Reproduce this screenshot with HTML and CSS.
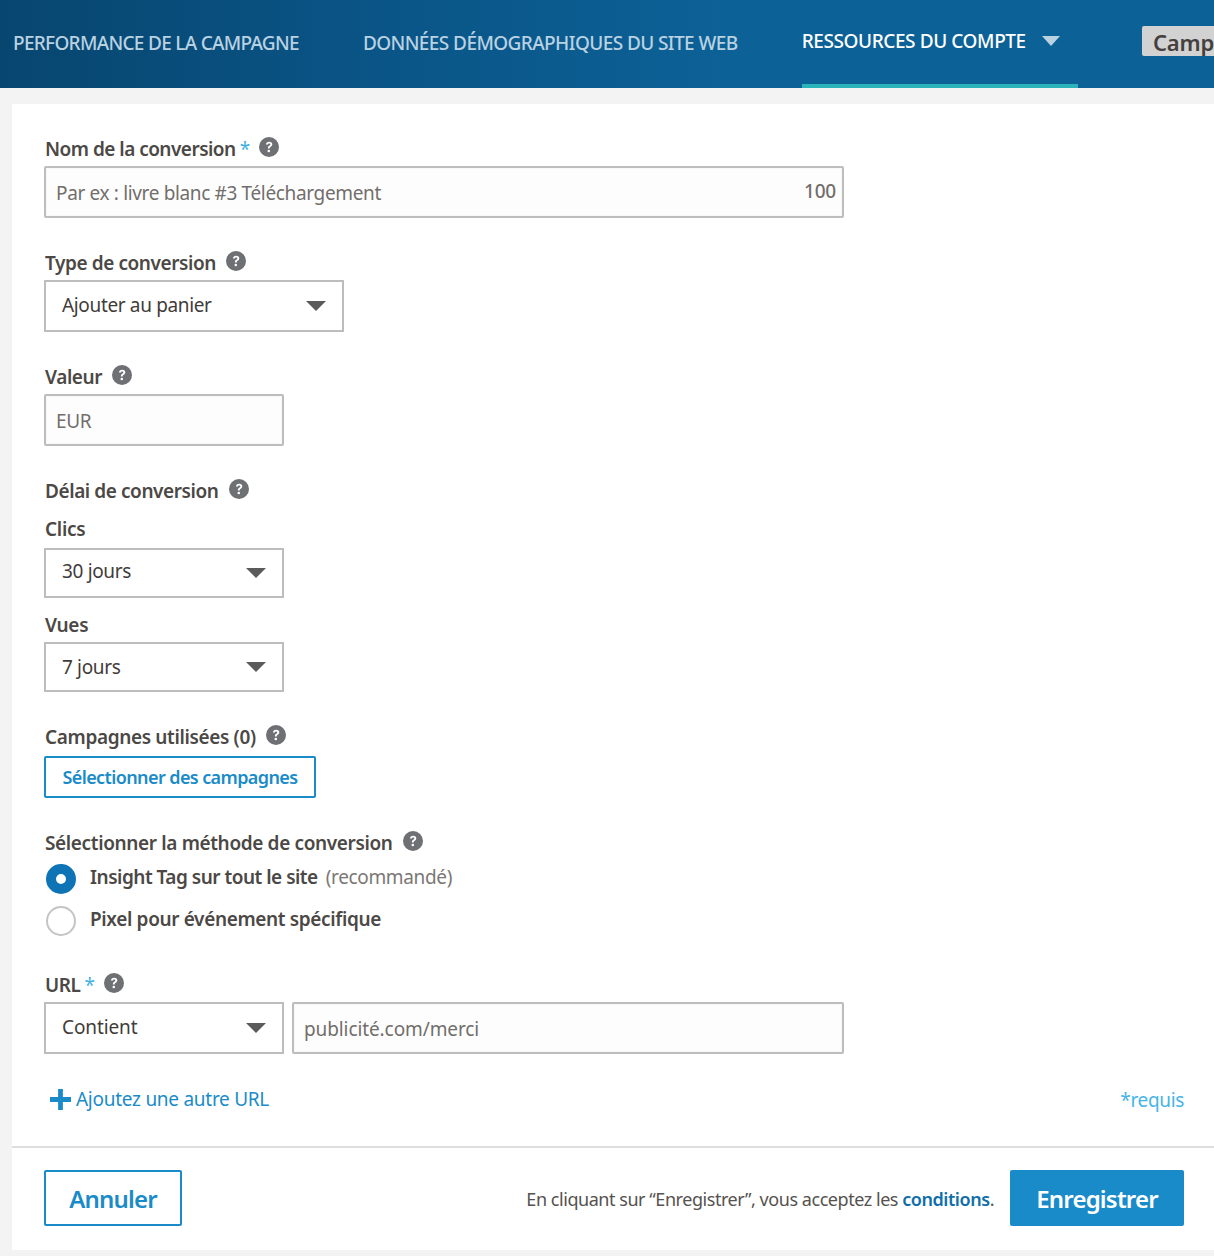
FILE: index.html
```html
<!DOCTYPE html>
<html lang="fr">
<head>
<meta charset="utf-8">
<title>Conversion</title>
<link rel="stylesheet" href="styles.css">
</head>
<body>
<header class="topbar">
  <nav class="tabs">
    <a class="tab tab-first">PERFORMANCE DE LA CAMPAGNE</a>
    <a class="tab tab-second">DONNÉES DÉMOGRAPHIQUES DU SITE WEB</a>
    <a class="tab tab-active"><span class="tab-active-text">RESSOURCES DU COMPTE</span><svg class="tab-caret" width="18" height="10" viewBox="0 0 18 10"><path d="M0 0h18L9 10z" fill="#b9d2e2"/></svg></a>
  </nav>
  <span class="pill">Camp</span>
</header>
<main class="card">
  <form class="form">
    <div class="label-row label-first"><span>Nom de la conversion</span><span class="star">*</span><svg class="help" viewBox="0 0 20 20"><use href="#q"/></svg></div>
    <div class="input input-full"><span class="input-text">Par ex : livre blanc #3 Téléchargement</span><span class="count">100</span></div>

    <div class="label-row gap-lg"><span>Type de conversion</span><svg class="help" viewBox="0 0 20 20"><use href="#q"/></svg></div>
    <div class="select select-type"><span class="select-text">Ajouter au panier</span><svg class="caret" viewBox="0 0 20 10"><path d="M0 0h20L10 10z"/></svg></div>

    <div class="label-row gap-lg"><span>Valeur</span><svg class="help" viewBox="0 0 20 20"><use href="#q"/></svg></div>
    <div class="input input-small"><span class="input-text">EUR</span></div>

    <div class="label-row gap-lg"><span>Délai de conversion</span><svg class="help" viewBox="0 0 20 20"><use href="#q"/></svg></div>
    <div class="sublabel sub-clics">Clics</div>
    <div class="select select-small select-short"><span class="select-text select-text-up">30 jours</span><svg class="caret" viewBox="0 0 20 10"><path d="M0 0h20L10 10z"/></svg></div>
    <div class="sublabel sub-vues">Vues</div>
    <div class="select select-small select-short">7 jours<svg class="caret" viewBox="0 0 20 10"><path d="M0 0h20L10 10z"/></svg></div>

    <div class="label-row gap-md label-wide"><span>Campagnes utilisées (0)</span><svg class="help" viewBox="0 0 20 20"><use href="#q"/></svg></div>
    <button class="btn-campaigns" type="button">Sélectionner des campagnes</button>

    <div class="label-row gap-sm label-wide"><span>Sélectionner la méthode de conversion</span><svg class="help" viewBox="0 0 20 20"><use href="#q"/></svg></div>
    <div class="radio-row radio-first"><span class="radio radio-on"></span><span class="radio-text">Insight Tag sur tout le site</span><span class="radio-note">(recommandé)</span></div>
    <div class="radio-row radio-second"><span class="radio"></span><span class="radio-text">Pixel pour événement spécifique</span></div>

    <div class="label-row gap-url"><span>URL</span><span class="star">*</span><svg class="help" viewBox="0 0 20 20"><use href="#q"/></svg></div>
    <div class="url-row">
      <div class="select select-small"><span class="select-text">Contient</span><svg class="caret" viewBox="0 0 20 10"><path d="M0 0h20L10 10z"/></svg></div>
      <div class="input input-url"><span class="input-text">publicité.com/merci</span></div>
    </div>

    <div class="add-row">
      <a class="add-link"><svg class="plus" viewBox="0 0 22 22"><path d="M8.500 0h5v8.500H22v5h-8.500V22h-5v-8.500H0v-5h8.500z"/></svg>Ajoutez une autre URL</a>
      <span class="required">*requis</span>
    </div>
  </form>
  <footer class="footer">
    <button class="btn-cancel" type="button">Annuler</button>
    <div class="footer-right">
      <span class="terms">En cliquant sur “Enregistrer”, vous acceptez les <a class="terms-link">conditions</a>.</span>
      <button class="btn-save" type="button">Enregistrer</button>
    </div>
  </footer>
</main>
<svg class="defs" width="0" height="0">
  <symbol id="q" viewBox="0 0 20 20">
    <circle cx="10" cy="10" r="10" fill="#6e7074"/>
    <path d="M6.900 7.600C7 5.700 8.300 4.700 10.200 4.700c1.900 0 3.100 1 3.100 2.600 0 1.200-.7 1.900-1.500 2.400-.8.500-1.100.9-1.100 1.700H8.900c-.1-1.300.4-2 1.200-2.600.7-.5 1.200-.8 1.200-1.400 0-.6-.4-1-1.100-1-.8 0-1.200.5-1.300 1.200z" fill="#fff"/>
    <circle cx="9.800" cy="14" r="1.300" fill="#fff"/>
  </symbol>
</svg>
</body>
</html>
```
FILE: styles.css
```css
* { box-sizing: border-box; }
html, body { margin: 0; padding: 0; }
body {
  width: 1214px;
  height: 1256px;
  overflow: hidden;
  background: #f3f3f3;
  font-family: "Noto Sans", "Liberation Sans", sans-serif;
  color: #4a4a4a;
}
.defs { display: block; }

.topbar {
  height: 88px;
  display: flex;
  background: linear-gradient(90deg, #07466f 0%, #0a5486 30%, #0c6196 60%, #0c6196 100%);
  overflow: hidden;
  position: relative;
}
.tabs {
  display: flex;
  padding-left: 13px;
  gap: 64px;
}
.tab {
  display: block;
  height: 88px;
  padding-top: 29px;
  font-size: 19px;
  line-height: 28px;
  font-weight: 500;
  color: #b9d2e2;
  white-space: nowrap;
}
.tab-first { letter-spacing: -.7px; }
.tab-second { letter-spacing: -.58px; }
.tab-active {
  width: 276px;
  padding-top: 27px;
  color: #fff;
  border-bottom: 4px solid #2ab3b8;
  display: flex;
  align-items: flex-start;
  letter-spacing: -.4px;
}
.tab-caret { margin: 9px 0 0 16px; flex: none; }
.pill {
  position: absolute;
  left: 1142px;
  right: 0;
  top: 26px;
  height: 30px;
  padding-left: 11px;
  background: #d2d2d2;
  border-radius: 2px 0 0 2px;
  color: #45403d;
  font-size: 22px;
  line-height: 32px;
  font-weight: 600;
  letter-spacing: -.2px;
}

.card {
  margin: 16px 0 0 12px;
  height: 1146px;
  background: #fff;
  display: flex;
  flex-direction: column;
}
.form {
  padding: 0 30px 0 32px;
  height: 1044px;
  border-bottom: 2px solid #dedede;
  font-size: 19px;
  letter-spacing: -.35px;
}

.label-row {
  height: 26px;
  display: flex;
  align-items: center;
  padding: 2px 0 0 1px;
  font-weight: 600;
  line-height: 24px;
  color: #4b4845;
  white-space: nowrap;
  letter-spacing: -.42px;
}
.label-first { margin-top: 31px; letter-spacing: -.52px; }
.label-wide { letter-spacing: -.36px; }
.gap-lg { margin-top: 31px; }
.gap-md { margin-top: 31px; }
.gap-sm { margin-top: 31px; }
.gap-url { margin-top: 35px; }
.label-row + .input, .label-row + .select { margin-top: 5px; }
.star { color: #3fb0e3; margin-left: 4px; font-weight: 400; }
.help { width: 20px; height: 20px; margin-left: 10px; margin-top: -4px; flex: none; }
.star + .help { margin-left: 9px; }

.input {
  height: 52px;
  background: #fdfdfd;
  border: 2px solid #bdbdbd;
  border-radius: 2px;
  box-shadow: inset 0 0 2px #ececec;
  display: flex;
  align-items: center;
  justify-content: space-between;
  padding: 0 6px 0 10px;
  color: #716e6b;
  white-space: nowrap;
}
.input-text { position: relative; top: 1px; }
.input-full { width: 800px; }
.input-small { width: 240px; }
.input-url { width: 552px; }
.count { font-weight: 500; margin-top: -2px; letter-spacing: -.2px; }

.select {
  width: 300px;
  height: 52px;
  border: 2px solid #bdbdbd;
  background: #fff;
  display: flex;
  align-items: center;
  justify-content: space-between;
  padding: 0 16px;
  color: #3f3c3a;
  white-space: nowrap;
}
.select-text { position: relative; top: -1px; }
.select-text-up { top: -2px; }
.select-small { width: 240px; }
.select-short { height: 50px; }
.caret { width: 20px; height: 10px; flex: none; fill: #5b5b5b; }

.sublabel {
  height: 26px;
  line-height: 26px;
  padding-left: 1px;
  font-weight: 600;
  color: #4b4845;
  letter-spacing: -.3px;
}
.sub-clics { margin-top: 13px; margin-bottom: 6px; }
.sub-vues { margin-top: 14px; margin-bottom: 4px; }

.btn-campaigns {
  display: block;
  width: 272px;
  height: 42px;
  padding: 0;
  margin-top: 7px;
  background: #fff;
  border: 2px solid #1a8bc9;
  border-radius: 2px;
  color: #1a8bc9;
  font: 600 18px "Noto Sans", sans-serif;
  letter-spacing: -.6px;
}

.radio-row {
  display: flex;
  align-items: center;
  height: 30px;
  white-space: nowrap;
  padding-left: 2px;
}
.radio-first { margin-top: 9px; }
.radio-second { margin-top: 12px; }
.radio {
  width: 30px;
  height: 30px;
  border: 2px solid #c4c4c4;
  border-radius: 50%;
  background: #fff;
  flex: none;
  margin-right: 14px;
}
.radio-on {
  border: 10px solid #0f74b5;
}
.radio-text { font-weight: 600; color: #4b4845; margin-top: -5px; letter-spacing: -.42px; }
.radio-first .radio-text { letter-spacing: -.5px; }
.radio-second .radio-text { letter-spacing: -.36px; }
.radio-note { color: #7a7774; margin-left: 8px; margin-top: -5px; }

.url-row { display: flex; gap: 8px; margin-top: 5px; letter-spacing: -.1px; }

.add-row {
  display: flex;
  justify-content: space-between;
  margin-top: 32px;
  padding-left: 6px;
  height: 26px;
  line-height: 26px;
}
.add-link { display: flex; align-items: center; color: #1a8bc9; letter-spacing: -.27px; }
.plus { width: 21px; height: 21px; fill: #1a8bc9; margin-right: 5px; flex: none; }
.required { color: #45b4e6; margin-top: 1px; }

.footer {
  display: flex;
  justify-content: space-between;
  padding: 22px 30px 0 32px;
}
.btn-cancel {
  width: 138px;
  height: 56px;
  padding: 0;
  background: #fff;
  border: 2px solid #1a8bc9;
  border-radius: 2px;
  color: #1a8bc9;
  font: 600 24px "Noto Sans", sans-serif;
  letter-spacing: -.8px;
}
.footer-right { display: flex; align-items: center; gap: 16px; }
.terms { font-size: 18px; line-height: 26px; padding-top: 2px; color: #55524f; letter-spacing: -.45px; }
.terms-link { color: #0f6eab; font-weight: 600; }
.btn-save {
  width: 174px;
  height: 56px;
  padding: 0;
  background: #1a8bc9;
  border: 0;
  border-radius: 2px;
  color: #fff;
  font: 600 24px "Noto Sans", sans-serif;
  letter-spacing: -.8px;
}
```
